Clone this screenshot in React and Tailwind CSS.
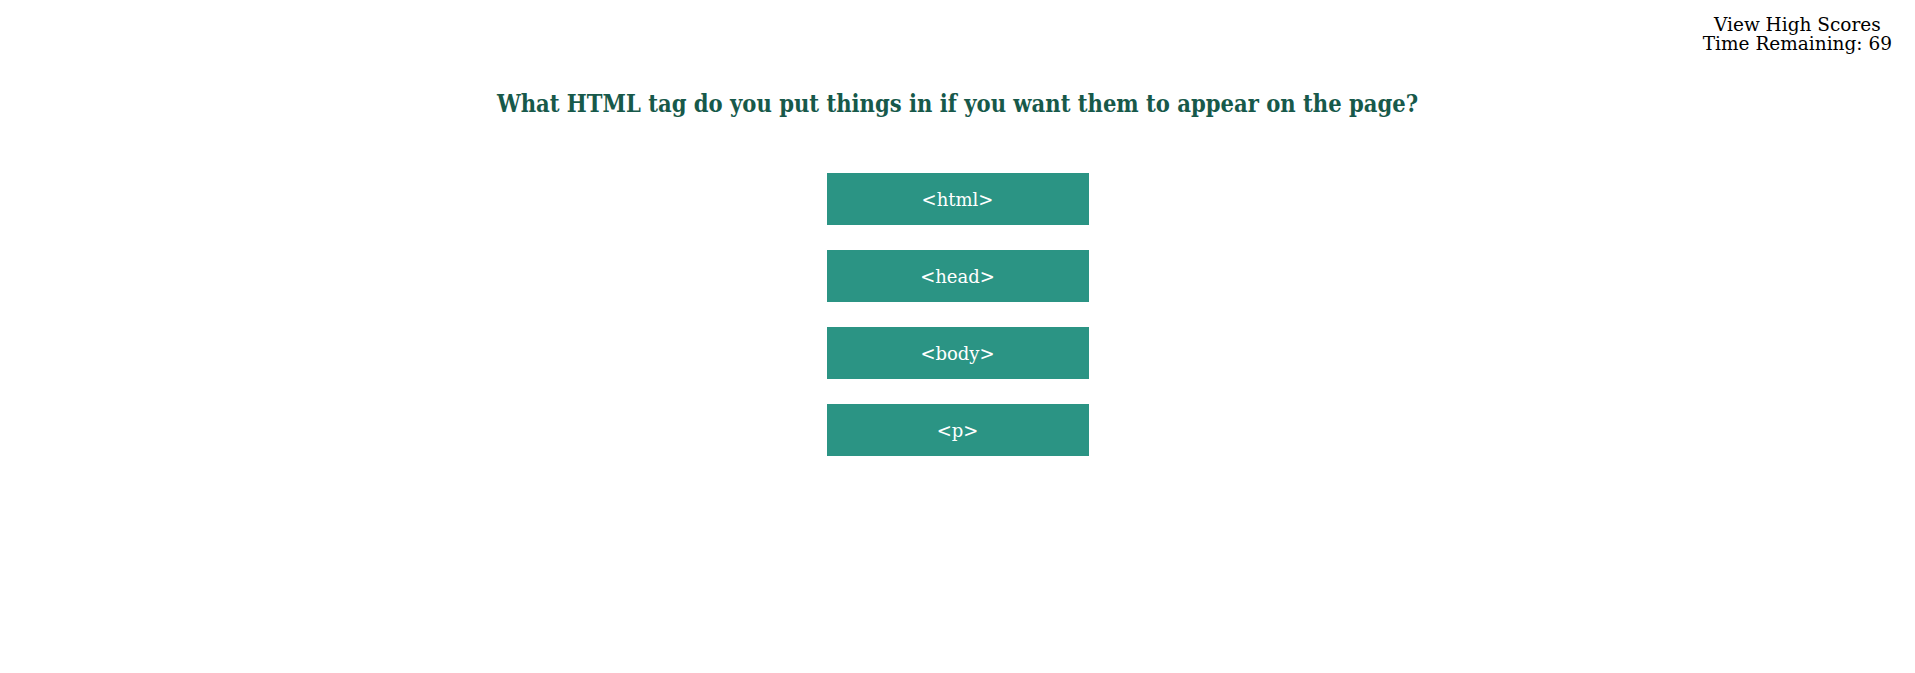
import React from "react";

const ANSWERS = ["<html>", "<head>", "<body>", "<p>"];

const App = () => {
  return (
    <div className="min-h-[673px] bg-white font-['DejaVu_Serif',serif]">
      {/* Header */}
      <div className="flex justify-end pr-[23px] pt-[15px]">
        <div className="text-center text-[18.5px] leading-[19px] text-black">
          <div>View High Scores</div>
          <div>Time Remaining: 69</div>
        </div>
      </div>

      {/* Question */}
      <div className="flex flex-col items-center">
        <h2 className="mt-[37px] text-[23.5px] leading-[28px] font-bold text-[#17594a] font-['DejaVu_Serif_Condensed','DejaVu_Serif',serif]">
          What HTML tag do you put things in if you want them to appear on the page?
        </h2>
        <div className="mt-[55px] flex flex-col gap-[25px]">
          {ANSWERS.map(a => (
            <button
              key={a}
              type="button"
              className="w-[262px] h-[52px] bg-[#2b9484] text-white text-[18px]"
            >
              {a}
            </button>
          ))}
        </div>
      </div>
    </div>
  );
};

export default App;
